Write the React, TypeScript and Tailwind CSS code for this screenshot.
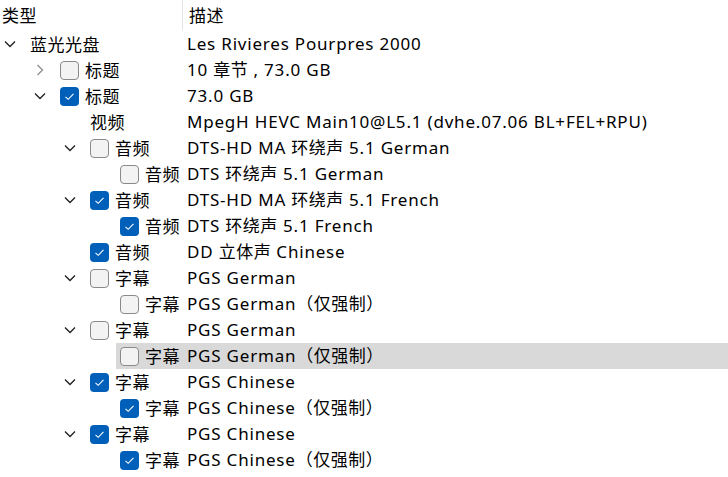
import React from "react";

type Row = {
  level: number;
  chevron?: "open" | "closed";
  check?: boolean | null;
  label: string;
  desc: string;
  selected?: boolean;
};

const rows: Row[] = [
  { level: 0, chevron: "open", check: null, label: "蓝光光盘", desc: "Les Rivieres Pourpres 2000" },
  { level: 1, chevron: "closed", check: false, label: "标题", desc: "10 章节 , 73.0 GB" },
  { level: 1, chevron: "open", check: true, label: "标题", desc: "73.0 GB" },
  { level: 2, check: null, label: "视频", desc: "MpegH HEVC Main10@L5.1 (dvhe.07.06 BL+FEL+RPU)" },
  { level: 2, chevron: "open", check: false, label: "音频", desc: "DTS-HD MA 环绕声 5.1 German" },
  { level: 3, check: false, label: "音频", desc: "DTS 环绕声 5.1 German" },
  { level: 2, chevron: "open", check: true, label: "音频", desc: "DTS-HD MA 环绕声 5.1 French" },
  { level: 3, check: true, label: "音频", desc: "DTS 环绕声 5.1 French" },
  { level: 2, check: true, label: "音频", desc: "DD 立体声 Chinese" },
  { level: 2, chevron: "open", check: false, label: "字幕", desc: "PGS German" },
  { level: 3, check: false, label: "字幕", desc: "PGS German（仅强制）" },
  { level: 2, chevron: "open", check: false, label: "字幕", desc: "PGS German" },
  { level: 3, check: false, label: "字幕", desc: "PGS German（仅强制）", selected: true },
  { level: 2, chevron: "open", check: true, label: "字幕", desc: "PGS Chinese" },
  { level: 3, check: true, label: "字幕", desc: "PGS Chinese（仅强制）" },
  { level: 2, chevron: "open", check: true, label: "字幕", desc: "PGS Chinese" },
  { level: 3, check: true, label: "字幕", desc: "PGS Chinese（仅强制）" },
];

const leftW = ["w-[26px]", "w-[56px]", "w-[86px]", "w-[116px]"];
const labelW = ["w-[158px]", "w-[128px]", "w-[98px]", "w-[68px]"];

function Txt({ s }: { s: string }) {
  const parts = s.split(/([\u3000-\u9fff\uff00-\uffef]+)/).filter((p) => p.length > 0);
  return (
    <>
      {parts.map((p, i) =>
        /[\u3000-\u9fff\uff00-\uffef]/.test(p) ? (
          <span key={i} className="tracking-[0.5px]">{p}</span>
        ) : (
          <span key={i} className="tracking-[0.8px]">{p}</span>
        )
      )}
    </>
  );
}

function Chevron({ kind }: { kind: "open" | "closed" }) {
  if (kind === "open") {
    return (
      <svg width="12" height="8" viewBox="0 0 12 8" className="ml-[4px]">
        <path d="M1 1.5 L6 6.5 L11 1.5" fill="none" stroke="#1f1f1f" strokeWidth="1.3" />
      </svg>
    );
  }
  return (
    <svg width="8" height="12" viewBox="0 0 8 12" className="ml-[6px]">
      <path d="M1.5 1 L6.5 6 L1.5 11" fill="none" stroke="#8e8e8e" strokeWidth="1.3" />
    </svg>
  );
}

function Box({ checked }: { checked: boolean }) {
  if (checked) {
    return (
      <div className="w-[19px] h-[19px] rounded-[4px] bg-[#005fb8] flex items-center justify-center shrink-0">
        <svg width="11" height="9" viewBox="0 0 11 9">
          <path d="M1.5 4.8 L4.2 7.3 L9.5 1.8" fill="none" stroke="#ffffff" strokeWidth="1.1" />
        </svg>
      </div>
    );
  }
  return (
    <div className="w-[19px] h-[19px] rounded-[4px] bg-[#f3f3f3] border border-[#8a8a8a] shrink-0" />
  );
}

export default function App() {
  return (
    <div
      className="w-[728px] h-[477px] bg-white text-black overflow-hidden text-[17px] leading-none"
      style={{ fontFamily: '"Noto Sans", "Noto Sans CJK SC", sans-serif' }}
    >
      <div className="flex h-[31px] items-start">
        <div className="w-[183px] h-[30px] flex items-center pl-[2px] border-r border-[#e5e5e5]">
          <Txt s="类型" />
        </div>
        <div className="h-[30px] flex items-center pl-[6px]">
          <Txt s="描述" />
        </div>
      </div>
      {rows.map((r, i) => (
        <div key={i} className="flex h-[26px] items-stretch">
          <div className={`${leftW[r.level]} shrink-0 flex items-center justify-end pr-[6px]`}>
            <div className="w-[20px] flex items-center">
              {r.chevron ? <Chevron kind={r.chevron} /> : null}
            </div>
          </div>
          <div className={`flex-1 flex items-center ${r.selected ? "bg-[#d9d9d9]" : ""}`}>
            <div className={`${labelW[r.level]} shrink-0 flex items-center pl-[4px]`}>
              {r.check === null ? null : <Box checked={!!r.check} />}
              <span className={r.check === null ? "" : "ml-[6px]"}>
                <Txt s={r.label} />
              </span>
            </div>
            <span className="pl-[3px] whitespace-nowrap mt-[-1px]">
              <Txt s={r.desc} />
            </span>
          </div>
        </div>
      ))}
    </div>
  );
}
